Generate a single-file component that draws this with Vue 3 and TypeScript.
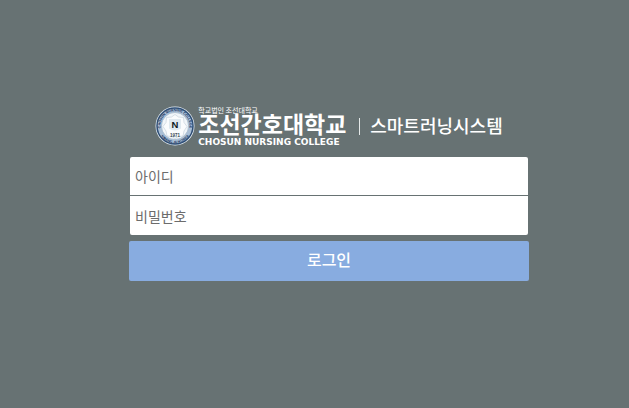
<script setup lang="ts">
import { ref } from 'vue'

const userId = ref('')
const password = ref('')
</script>

<template>
  <main class="page">
    <form class="login" @submit.prevent>
      <header class="brand">
        <svg class="emblem" viewBox="0 0 80 80" role="img" aria-label="CHOSUN NURSING COLLEGE">
          <defs>
            <path id="ring-top" d="M13 50 A29 29 0 1 1 67 50" />
            <path id="ring-bottom" d="M8 52 A34 34 0 0 0 72 52" />
          </defs>
          <circle cx="40" cy="40" r="39" fill="#e4edf5" />
          <circle cx="40" cy="40" r="36" fill="#a9bfd6" stroke="#2f4e75" stroke-width="3" />
          <text class="ring"><textPath href="#ring-top" startOffset="50%" text-anchor="middle">CHOSUN NURSING COLLEGE</textPath></text>
          <text class="ring"><textPath href="#ring-bottom" startOffset="50%" text-anchor="middle">KWANG JU KOREA</textPath></text>
          <circle cx="40" cy="40" r="27" fill="#f1f6f9" stroke="#8fa5bb" stroke-width="1" />
          <path d="M40 17 L47 22 L57 23 L58 33 L64 41 L58 50 L56 60 L46 61 L40 65 L34 61 L24 60 L22 50 L16 41 L22 33 L23 23 L33 22 Z" fill="#fafcfd" stroke="#b4c3d0" stroke-width="1" />
          <path d="M28 26 H52 V45 Q40 53 28 45 Z" fill="#dfe9ef" />
          <text class="initial" x="40" y="44">N</text>
          <text class="year" x="40" y="61">1971</text>
        </svg>
        <div class="school">
          <span class="foundation">학교법인 조선대학교</span>
          <strong class="name">조선간호대학교</strong>
          <span class="english">CHOSUN NURSING COLLEGE</span>
        </div>
        <span class="divider"></span>
        <h1 class="system">스마트러닝시스템</h1>
      </header>
      <div class="fields">
        <input v-model="userId" type="text" placeholder="아이디" aria-label="아이디" autocomplete="username" />
        <input v-model="password" type="password" placeholder="비밀번호" aria-label="비밀번호" autocomplete="current-password" />
      </div>
      <button class="submit" type="submit">로그인</button>
    </form>
  </main>
</template>

<style>
body {
  background: #677273;
}
</style>

<style scoped>
.page {
  display: flex;
  justify-content: center;
  padding: 106px 0 48px 29px;
  font-family: "Noto Sans CJK KR", sans-serif;
}
.login {
  width: 100%;
  max-width: 400px;
}
.brand {
  display: flex;
  justify-content: center;
  align-items: center;
  height: 40px;
  margin-bottom: 11px;
  color: #fff;
}
.emblem {
  flex: none;
  width: 40px;
  height: 40px;
  margin-right: 3px;
}
.ring {
  font: bold 7px "Liberation Sans", sans-serif;
  fill: #14305a;
}
.initial {
  font: bold 19px "Liberation Sans", sans-serif;
  fill: #0c1822;
  text-anchor: middle;
}
.year {
  font: bold 9px "Liberation Sans", sans-serif;
  fill: #34434f;
  text-anchor: middle;
}
.school {
  display: flex;
  flex-direction: column;
  min-width: 153px;
  padding-top: 2px;
  white-space: nowrap;
}
.foundation {
  font-size: 7px;
  line-height: 7px;
}
.name {
  font-size: 23px;
  font-weight: 700;
  line-height: 19px;
}
.english {
  padding-top: 3px;
  font: bold 9px/12px "DejaVu Sans", sans-serif;
}
.divider {
  width: 1px;
  height: 17px;
  margin: 0 10px 0 8px;
  background: #e4e8e8;
}
.system {
  margin: 0;
  padding-bottom: 2px;
  font-size: 18px;
  font-weight: 500;
  line-height: 24px;
  white-space: nowrap;
}
.fields {
  display: grid;
  gap: 1px;
  margin: 0 1px 6px;
}
.fields input {
  box-sizing: border-box;
  width: 100%;
  height: 39px;
  padding: 0 5px;
  border: 0;
  border-radius: 0 0 2px 2px;
  background: #fff;
  color: #333;
  font: 14px "Noto Sans CJK KR", sans-serif;
}
.fields input:first-child {
  height: 38px;
  border-radius: 2px 2px 0 0;
}
.fields input::placeholder {
  color: #6c6c6c;
  opacity: 1;
}
.submit {
  display: block;
  width: 100%;
  height: 40px;
  padding: 0 0 5px;
  border: 0;
  border-radius: 2px;
  background: #88ace0;
  color: #fff;
  font: 500 16px "Noto Sans CJK KR", sans-serif;
}
</style>
